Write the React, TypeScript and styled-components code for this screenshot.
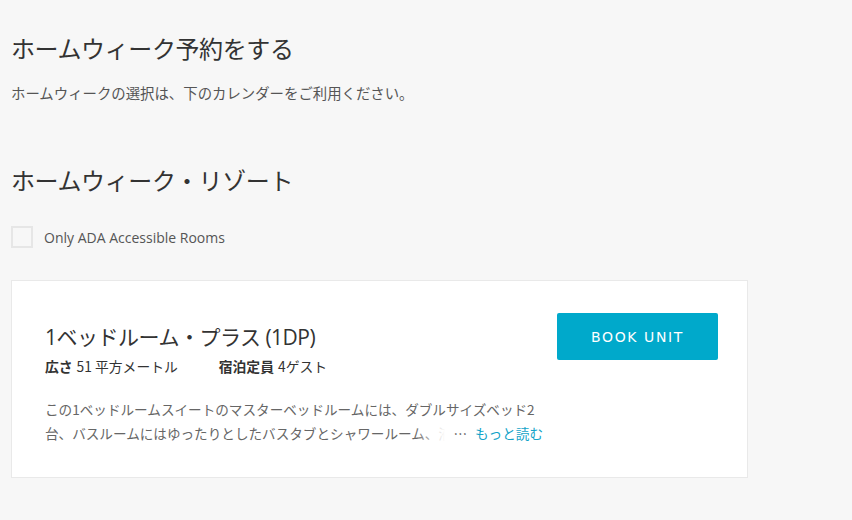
import React from "react";
import styled, { createGlobalStyle } from "styled-components";

const Global = createGlobalStyle`
  html, body { margin: 0; padding: 0; background: #f7f7f7; }
  body { font-family: "Open Sans", "Noto Sans CJK JP", sans-serif; color: #333; }
`;

const Page = styled.div`
  padding: 30px 104px 40px 11px;
  display: flex;
  flex-direction: column;
`;

const Title = styled.h1`
  margin: 0;
  font-weight: 400;
  font-size: 24px;
  line-height: 36px;
  color: #333;
  font-family: "Noto Sans CJK JP", sans-serif;
  letter-spacing: -0.4px;
`;

const Lead = styled.p`
  margin: 17px 0 0;
  font-size: 14.4px;
  line-height: 20px;
  color: #555;
  font-family: "Noto Sans CJK JP", sans-serif;
`;

const SectionTitle = styled(Title)`
  margin-top: 59px;
`;

const CheckRow = styled.label`
  display: flex;
  align-items: center;
  gap: 11px;
  margin-top: 28px;
  font-size: 14px;
  color: #555;
`;

const Box = styled.span`
  width: 18px;
  height: 18px;
  border: 2px solid #e6e6e6;
  background: #f7f7f7;
`;

const Card = styled.div`
  margin-top: 32px;
  background: #fff;
  border: 1px solid #e9e9e9;
  padding: 32px 29px 32px 33px;
  display: flex;
  justify-content: space-between;
  align-items: flex-start;
`;

const Info = styled.div`
  display: flex;
  flex-direction: column;
`;

const UnitName = styled.h2`
  margin: 9px 0 0;
  font-weight: 400;
  font-size: 21px;
  line-height: 30px;
  color: #333;
  font-family: "Open Sans", "Noto Sans CJK JP", sans-serif;
  letter-spacing: -0.5px;
`;

const Specs = styled.div`
  display: flex;
  gap: 41px;
  margin-top: 4px;
  font-size: 13.8px;
  line-height: 20px;
  color: #333;
  font-family: "Noto Sans CJK JP", sans-serif;
`;

const Spec = styled.span`
  b { font-weight: 700; margin-right: 4px; }
`;

const Desc = styled.div`
  position: relative;
  margin-top: 21px;
  width: 498px;
  max-height: 48px;
  overflow: hidden;
  font-size: 13.6px;
  line-height: 24px;
  color: #666;
  font-family: "Noto Sans CJK JP", sans-serif;
`;

const More = styled.span`
  position: absolute;
  right: 0;
  bottom: 0;
  height: 24px;
  display: flex;
  align-items: center;
  background: #fff;
  padding-left: 8px;
  color: #555;
  &::before {
    content: "";
    position: absolute;
    left: -30px;
    top: 0;
    width: 30px;
    height: 24px;
    background: linear-gradient(to right, rgba(255,255,255,0), #fff);
  }
`;

const MoreLink = styled.a`
  color: #12a3c8;
  margin-left: 8px;
  text-decoration: none;
`;

const BookButton = styled.button`
  width: 161px;
  height: 47px;
  border: none;
  border-radius: 2px;
  background: #00a9cb;
  color: #fff;
  font-family: "DejaVu Sans", sans-serif;
  font-size: 14px;
  letter-spacing: 1.6px;
  cursor: pointer;
  flex-shrink: 0;
`;

export default function App() {
  return (
    <>
      <Global />
      <Page>
        <Title>ホームウィーク予約をする</Title>
        <Lead>ホームウィークの選択は、下のカレンダーをご利用ください。</Lead>
        <SectionTitle>ホームウィーク・リゾート</SectionTitle>
        <CheckRow>
          <Box />
          Only ADA Accessible Rooms
        </CheckRow>
        <Card>
          <Info>
            <UnitName>1ベッドルーム・プラス (1DP)</UnitName>
            <Specs>
              <Spec><b>広さ</b>51 平方メートル</Spec>
              <Spec><b>宿泊定員</b>4ゲスト</Spec>
            </Specs>
            <Desc>
              この1ベッドルームスイートのマスターベッドルームには、ダブルサイズベッド2台、バスルームにはゆったりとしたバスタブとシャワールーム、液晶テレビ、そしてリビングエリアにはソファベッドがあります。
              <More>
                …<MoreLink href="#">もっと読む</MoreLink>
              </More>
            </Desc>
          </Info>
          <BookButton>BOOK UNIT</BookButton>
        </Card>
      </Page>
    </>
  );
}
